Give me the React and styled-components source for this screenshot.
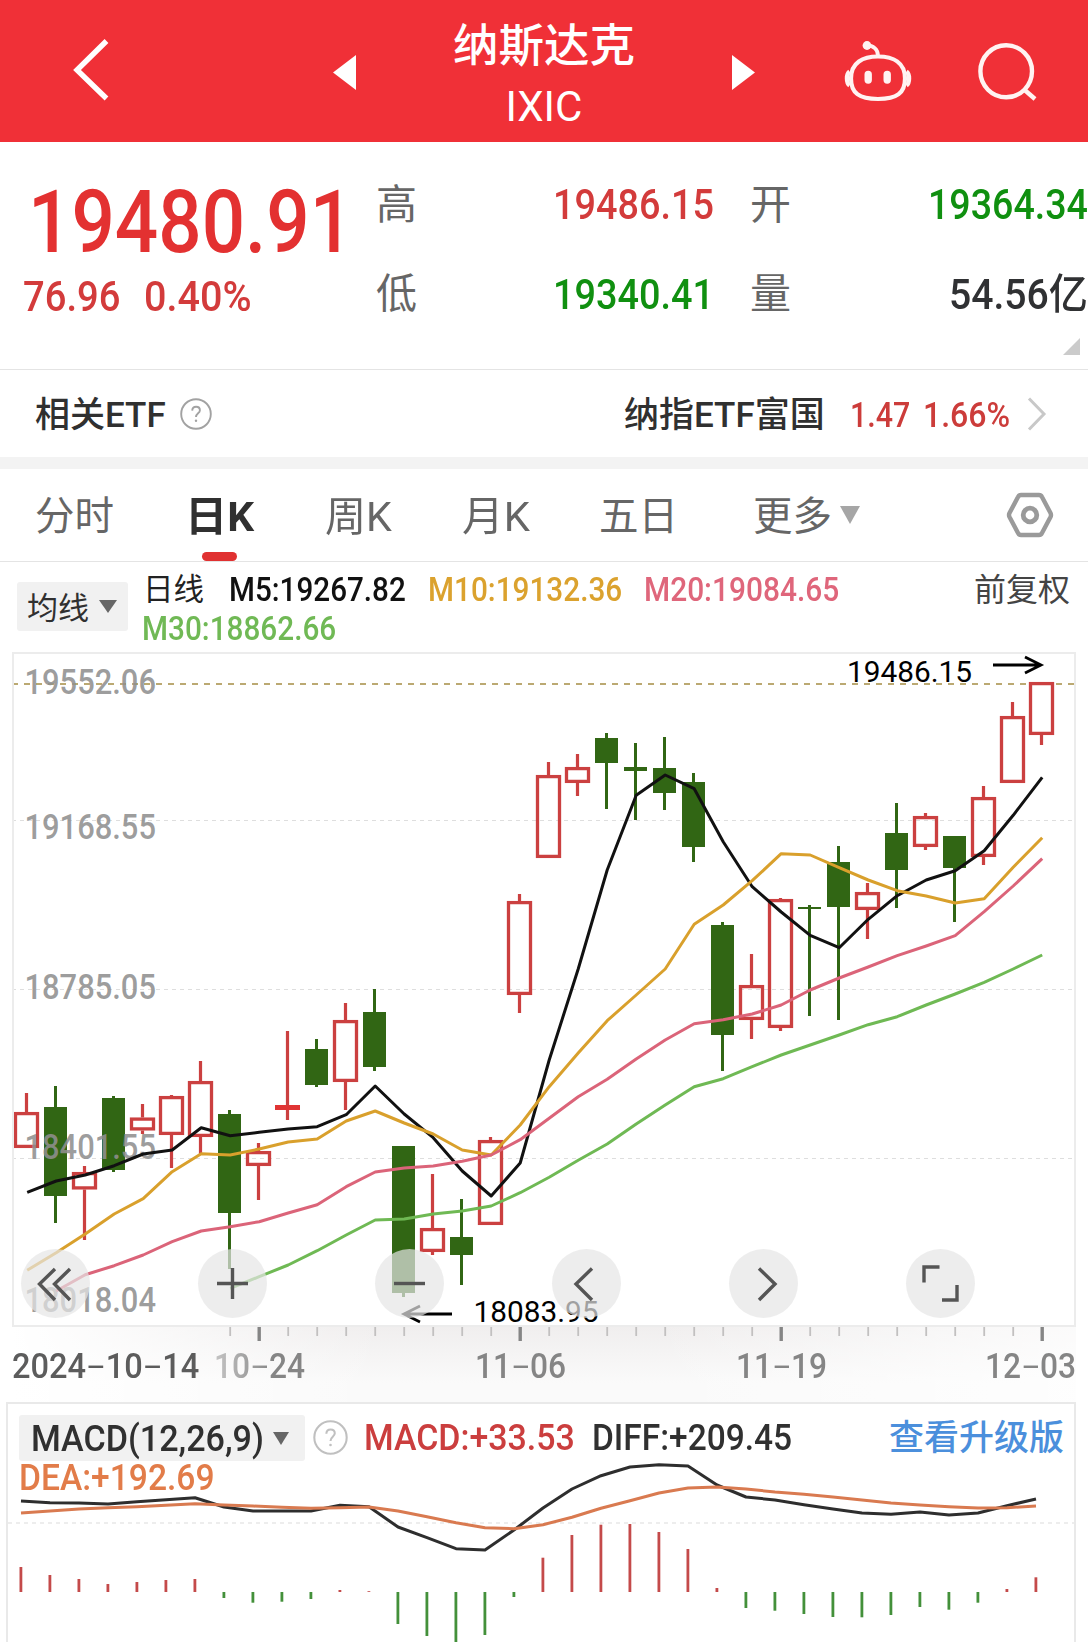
import React, { useLayoutEffect, useRef, useState } from "react";
import styled, { createGlobalStyle, css } from "styled-components";

const GlobalStyle = createGlobalStyle`
  * { box-sizing: border-box; }
  html, body { margin: 0; padding: 0; background: #fff; }
  body { font-family: Roboto, "Noto Sans CJK SC", sans-serif; overflow: hidden; }
  svg { display: block; }
`;

const UP = "#d33b3b";
const DOWN = "#109010";
const CANDLE_UP = "#cb4040";
const CANDLE_DOWN = "#316614";

/* ---------- text that is condensed to a given width ---------- */

const FitBox = styled.span`
  display: block;
  flex: none;
  width: ${(p) => p.$w}px;
  margin-left: ${(p) => p.$gap || 0}px;
  height: ${(p) => p.$line}px;
  line-height: ${(p) => p.$line + 2 * p.$drop}px;
  font-size: ${(p) => p.$size}px;
  font-weight: ${(p) => p.$weight || 500};
  color: ${(p) => p.$color};
  white-space: nowrap;
`;

const FitInner = styled.span`
  display: inline-block;
  vertical-align: top;
  transform-origin: 0 50%;
`;

const Dash = styled.span`
  display: inline-block;
  transform: scale(1.75, 0.75);
  margin: 0 0.13em;
`;

function Fit({ w, gap, line = 50, drop = 0, size, weight, color, children }) {
  const ref = useRef(null);
  const [scale, setScale] = useState(1);
  useLayoutEffect(() => {
    const measure = () => ref.current && setScale(w / ref.current.offsetWidth);
    measure();
    if (document.fonts) document.fonts.ready.then(measure);
  }, [w]);
  const parts = String(children).split("-");
  return (
    <FitBox $w={w} $gap={gap} $line={line} $drop={drop} $size={size} $weight={weight} $color={color}>
      <FitInner ref={ref} style={{ transform: `scaleX(${scale})` }}>
        {parts.map((t, i) => (
          <React.Fragment key={i}>
            {i > 0 && <Dash>-</Dash>}
            {t}
          </React.Fragment>
        ))}
      </FitInner>
    </FitBox>
  );
}

/* ---------- page pieces ---------- */

const Page = styled.main`
  width: 1088px;
  height: 1642px;
  overflow: hidden;
  background: #fff;
`;

const Header = styled.header`
  display: flex;
  align-items: flex-start;
  height: 142px;
  background: #f03037;
`;

const IconSlot = styled.span`
  flex: none;
  margin-left: ${(p) => p.$gap || 0}px;
  margin-top: ${(p) => p.$top || 0}px;
`;

const TitleBlock = styled.div`
  flex: none;
  width: 376px;
  padding-top: 15px;
  display: flex;
  flex-direction: column;
  align-items: center;
`;

const Quote = styled.section`
  position: relative;
  display: flex;
  height: 228px;
  border-bottom: 1px solid #e4e4e4;
`;

const PriceBlock = styled.div`
  flex: none;
  width: 376px;
  padding-top: 40px;
`;

const Line = styled.div`
  display: flex;
  align-items: center;
`;

const Stats = styled.div`
  display: grid;
  grid-template-columns: 39px 299px 36px 39px 299px;
  grid-template-rows: 89px 89px;
  align-items: center;
  padding-top: 17px;
  height: 195px;
`;

const StatValue = styled.div`
  display: flex;
  justify-content: flex-end;
`;

const Corner = styled.i`
  position: absolute;
  right: 8px;
  bottom: 14px;
  border-style: solid;
  border-width: 0 0 17px 17px;
  border-color: transparent transparent #cbcbcb transparent;
`;

const EtfRow = styled.section`
  display: flex;
  align-items: center;
  height: 99px;
  border-bottom: 12px solid #f3f3f3;
`;

const Tabs = styled.nav`
  display: flex;
  align-items: center;
  height: 93px;
  border-bottom: 1px solid #e4e4e4;
`;

const Tab = styled.div`
  position: relative;
  flex: none;
  margin-left: ${(p) => p.$gap}px;
  ${(p) =>
    p.$active &&
    css`
      &::after {
        content: "";
        position: absolute;
        left: 17px;
        bottom: -21px;
        width: 35px;
        height: 9px;
        border-radius: 5px;
        background: #e03131;
      }
    `}
`;

const Caret = styled.i`
  flex: none;
  margin-left: ${(p) => p.$gap}px;
  border-style: solid;
  border-width: ${(p) => p.$h}px ${(p) => p.$w / 2}px 0;
  border-color: ${(p) => p.$color} transparent transparent;
`;

const MaRow = styled.section`
  display: flex;
  height: 90px;
`;

const Pill = styled.div`
  flex: none;
  display: flex;
  align-items: center;
  width: ${(p) => p.$w}px;
  height: ${(p) => p.$h}px;
  margin: ${(p) => p.$m};
  border-radius: 3px;
  background: #f1f1f1;
`;

const MaValues = styled.div`
  flex: none;
  width: 832px;
  padding-top: 8px;
`;

const ChartPanel = styled.section`
  position: relative;
  width: 1064px;
  height: 675px;
  margin-left: 12px;
  border: 2px solid #ececec;
`;

const Controls = styled.div`
  position: absolute;
  left: 7px;
  bottom: 7px;
  display: flex;
  gap: 108px;
`;

const RoundButton = styled.button`
  width: 69px;
  height: 69px;
  padding: 0;
  border: 0;
  border-radius: 50%;
  background: rgba(230, 230, 230, 0.7);
`;

const Axis = styled.section`
  width: 1064px;
  height: 75px;
  margin-left: 12px;
  background: linear-gradient(90deg, #fff 0, rgba(255, 255, 255, 0) 35%, rgba(255, 255, 255, 0) 60%, rgba(255, 255, 255, 0.75) 100%),
    linear-gradient(#f0eeee, #fafafa 75%);
`;

const Dates = styled.div`
  display: flex;
  padding-top: 9px;
`;

const FadeIn = styled.div`
  margin-left: 15px;
  -webkit-mask-image: linear-gradient(90deg, rgba(0, 0, 0, 0.45), #000 65%);
  mask-image: linear-gradient(90deg, rgba(0, 0, 0, 0.45), #000 65%);
`;

const MacdPanel = styled.section`
  position: relative;
  width: 1070px;
  height: 240px;
  margin-left: 6px;
  border: 2px solid #e9e9e9;
  border-bottom: 0;
`;

const MacdPlot = styled.svg`
  position: absolute;
  left: 0;
  top: 0;
`;

/* ---------- data, in plot units ---------- */

// [direction, high, body top, body bottom, low]
const candles = [
  ["u", 1093, 1112, 1148, 1148], ["d", 1086, 1107, 1196, 1223], ["u", 1166, 1172, 1189.5, 1240],
  ["d", 1096, 1098, 1170, 1172], ["u", 1104, 1117.5, 1130.5, 1134], ["u", 1095, 1096, 1135, 1168],
  ["u", 1061, 1081, 1137, 1154], ["d", 1110, 1114, 1213, 1269], ["u", 1143, 1151, 1166, 1200],
  ["u", 1031, 1105, 1110, 1120], ["d", 1039, 1049, 1085, 1087], ["u", 1003, 1020, 1082, 1110],
  ["d", 989, 1012, 1067, 1071], ["d", 1146, 1146, 1293, 1297], ["u", 1174, 1228, 1252, 1255],
  ["d", 1199, 1237, 1255, 1285], ["u", 1137, 1140, 1225, 1225], ["u", 894, 901, 995, 1013],
  ["u", 762, 775, 858, 858], ["u", 754, 767, 783, 796], ["d", 733, 738, 763, 809],
  ["d", 743, 767, 771, 820], ["d", 737, 768, 793, 810], ["d", 773, 782, 847, 862],
  ["d", 922, 925, 1035, 1071], ["u", 954, 985, 1020, 1039], ["u", 898, 899, 1028, 1031],
  ["d", 905, 907, 909, 1016], ["d", 846, 862, 907, 1020], ["u", 883, 892, 910, 939],
  ["d", 803, 833, 870, 908], ["u", 813, 816, 847, 850], ["d", 836, 836, 868, 922],
  ["u", 786, 797, 857, 865], ["u", 702, 716, 783, 783], ["u", 682, 682, 735, 745],
];

const ma5 = [1192.3, 1181, 1175, 1165.7, 1154, 1150, 1127.7, 1135.7, 1132.3, 1129, 1126.7, 1114.7, 1086, 1114, 1137.7, 1171, 1196, 1163, 1060, 969, 870, 795.3, 775, 788.7, 841.7, 886.7, 912, 935.3, 947.7, 919.3, 895.7, 880, 870.7, 850.7, 815.3, 777.3];
const ma10 = [1270.3, 1252.7, 1234, 1214, 1198.7, 1171.7, 1153.7, 1155, 1149, 1142, 1139, 1121, 1111, 1123, 1134, 1150, 1155, 1125, 1086.7, 1053, 1020.7, 995, 969, 924.3, 905, 880.7, 853.7, 855, 867.7, 880, 890.7, 896, 903, 898.7, 867.3, 837.7];
const ma20 = [1291, 1274.7, 1265.7, 1255, 1241.7, 1231, 1226.7, 1221.7, 1213, 1204.7, 1186.7, 1172, 1168, 1166, 1161.3, 1155, 1139.7, 1118.3, 1096.7, 1079.3, 1059, 1040, 1023.7, 1019.7, 1014, 1005, 990, 978, 967, 955.7, 946, 935.7, 911.7, 886, 858.7];
const ma30 = [1288.3, 1276.7, 1265, 1250.7, 1235, 1220, 1219, 1214, 1211, 1206, 1192.7, 1177.3, 1160.3, 1144, 1124, 1105, 1086.7, 1078.7, 1066.7, 1055, 1045, 1035, 1024.7, 1016.7, 1005, 994, 982.3, 969, 955];

const diff = [1501, 1502.7, 1503, 1504, 1501.7, 1499.7, 1497.7, 1507, 1511, 1511, 1511, 1505.3, 1506.7, 1527, 1537.7, 1548.7, 1550, 1530, 1508, 1489, 1475.7, 1467, 1464.7, 1466, 1485, 1497, 1500, 1504.7, 1509, 1513, 1514.3, 1512, 1515, 1513, 1505.7, 1499];
const dea = [1513, 1511, 1509, 1507.7, 1506.7, 1505.3, 1503.7, 1505, 1506, 1507.3, 1508.3, 1507.7, 1507, 1511, 1516.7, 1522.7, 1527.7, 1528.7, 1524.7, 1517.3, 1508.3, 1500.7, 1493, 1488, 1487, 1489, 1492, 1494.3, 1497, 1500, 1503, 1505, 1506.7, 1508, 1507.7, 1506];
const bars = [1567, 1575, 1579, 1584, 1582, 1580, 1579, 1598, 1602.7, 1601.7, 1599, 1590, 1591.2, 1624, 1636, 1650, 1635, 1597, 1557.7, 1535, 1524.7, 1524, 1532, 1549, 1588, 1608, 1610.7, 1614, 1617, 1617.3, 1615, 1607, 1609.7, 1602.7, 1589, 1577.3];

const line = (ys, x0, skip = 0) => ys.map((y, i) => `${x0 + 29 * (i + skip)},${y}`).join(" ");

function Candle({ i, data }) {
  const [dir, high, top, bottom, low] = data;
  const x = 26.5 + 29 * i;
  if (dir === "d") {
    return (
      <g fill={CANDLE_DOWN}>
        <rect x={x - 1.5} y={high} width="3" height={low - high} />
        <rect x={x - 11.5} y={top} width="23" height={bottom - top} />
      </g>
    );
  }
  return (
    <g fill={CANDLE_UP}>
      <rect x={x - 1.6} y={high} width="3.200" height={top - high} />
      <rect x={x - 1.6} y={bottom} width="3.200" height={low - bottom} />
      {bottom - top < 6 ? (
        <rect x={x - 12.5} y={top} width="25" height={bottom - top} fill="#e03434" />
      ) : (
        <rect x={x - 11} y={top + 1.6} width="22" height={bottom - top - 3.2} fill="none" stroke={CANDLE_UP} strokeWidth="3.300" />
      )}
    </g>
  );
}

function CandleChart() {
  const priceLabels = [["19552.06", 694], ["19168.55", 838.5], ["18785.05", 998.5], ["18401.55", 1159], ["18018.04", 1311.5]];
  return (
    <svg width="1060" height="671" viewBox="14 654 1060 671">
      {[820.5, 989.5, 1158.5].map((y) => (
        <line key={y} x1="12" x2="1074" y1={y} y2={y} stroke="#dedede" strokeDasharray="4 4" />
      ))}
      <line x1="12" x2="1074" y1="684" y2="684" stroke="#bba972" strokeWidth="2" strokeDasharray="6 6" />
      {candles.map((c, i) => (
        <Candle key={i} i={i} data={c} />
      ))}
      <g fill="#8f8f8f" fillOpacity="0.88" fontSize="35" fontWeight="500">
        {priceLabels.map(([t, y]) => (
          <text key={t} x="24.5" y={y} textLength="131.500" lengthAdjust="spacingAndGlyphs">{t}</text>
        ))}
      </g>
      <g fill="none" strokeWidth="3" strokeLinejoin="round">
        <polyline points={line(ma30, 27.2, 7)} stroke="#6fb954" />
        <polyline points={line(ma5, 27.2)} stroke="#111" />
        <polyline points={line(ma10, 27.2)} stroke="#d9a02c" />
        <polyline points={line(ma20, 27.2, 1)} stroke="#db6479" />
      </g>
      <g fill="#000" fontSize="29.500">
        <text x="847" y="682" textLength="125" lengthAdjust="spacingAndGlyphs">19486.15</text>
        <text x="473.500" y="1322" textLength="125" lengthAdjust="spacingAndGlyphs">18083.95</text>
      </g>
      <g fill="none" stroke="#000" strokeWidth="2.8">
        <path d="M993 665h48M1025 657l16 8-16 8" />
        <path d="M452 1314h-47M420 1306l-16 8 16 8" />
      </g>
    </svg>
  );
}

const controlPaths = [
  "M34 20 18.500 35 34 51M49 20 33.500 35 49 51",
  "M19 34.500h31M34.500 19v31",
  "M19 34.500h31",
  "M40 19.500 24 35 40 51",
  "M30 19.500 46 35 30 51",
  "M18 33.500V18h15.500M51 36v15H36",
];

function HelpIcon({ size, color }) {
  return (
    <svg width={size} height={size} viewBox="0 0 32 32" fill="none" stroke={color} strokeWidth="1.9">
      <circle cx="16" cy="16" r="14.800" />
      <path d="M12.200 12.600c.1-2.500 1.700-3.900 3.900-3.900s3.800 1.400 3.800 3.500c0 3.200-3.900 3.100-3.900 6.900" />
      <circle cx="16" cy="22.800" r="1.200" fill={color} stroke="none" />
    </svg>
  );
}

export default function App() {
  return (
    <>
      <GlobalStyle />
      <Page>
        <Header>
          <IconSlot $gap={70} $top={37}>
            <svg width="42" height="66" fill="none" stroke="#fff" strokeWidth="5.400"><path d="M36.500 4 7 33 36.500 61.500" /></svg>
          </IconSlot>
          <IconSlot $gap={221} $top={55}>
            <svg width="23" height="35" fill="#fff"><path d="M23 0v35L0 17.500z" /></svg>
          </IconSlot>
          <TitleBlock>
            <Fit w={182} line={60} drop={2} size={45.5} weight={500} color="#fff">纳斯达克</Fit>
            <Fit w={77} line={62} drop={1} size={42} weight={400} color="#fff">IXIC</Fit>
          </TitleBlock>
          <IconSlot $top={55}>
            <svg width="23" height="35" fill="#fff"><path d="M0 0v35l23-17.500z" /></svg>
          </IconSlot>
          <IconSlot $gap={89} $top={40}>
            <svg width="68" height="64" viewBox="0 0 68 64" fill="none" stroke="#fff3f2" strokeWidth="4.200">
              <circle cx="23" cy="5.500" r="4.400" fill="#fff3f2" stroke="none" />
              <path d="M23 5.500C29 5.500 34 9 34 16" strokeWidth="3.800" />
              <path d="M34 16.500C49 16.500 61 22.500 61 38.500 61 53 53 59 34 59S7 53 7 38.500C7 22.500 19 16.500 34 16.500z" />
              <path d="M5.500 31.500C2 34 2 43 5.500 45.500M62.500 31.500C66 34 66 43 62.500 45.500" />
              <path d="M24.200 34.500v5.500M43.200 34.500v5.500" strokeWidth="7.400" strokeLinecap="round" />
            </svg>
          </IconSlot>
          <IconSlot $gap={65} $top={42}>
            <svg width="62" height="62" fill="none" stroke="#fff3f2" strokeWidth="4.400">
              <ellipse cx="29.200" cy="29.300" rx="25.800" ry="26" />
              <path d="M46.500 47 58 57" />
            </svg>
          </IconSlot>
        </Header>

        <Quote>
          <PriceBlock>
            <Fit w={325} gap={28} line={80} drop={1} size={86.5} color="#e33131">19480.91</Fit>
            <Line>
              <Fit w={97} gap={23} line={66} drop={1.5} size={42.5} color={UP}>76.96</Fit>
              <Fit w={108} gap={24} line={66} drop={1.5} size={42.5} color={UP}>0.40%</Fit>
            </Line>
          </PriceBlock>
          <Stats>
            <Fit w={41} drop={1} size={41} weight={400} color="#666">高</Fit>
            <StatValue><Fit w={161} drop={1} size={42.5} color={UP}>19486.15</Fit></StatValue>
            <span />
            <Fit w={41} drop={1} size={41} weight={400} color="#666">开</Fit>
            <StatValue><Fit w={160} drop={1} size={42.5} color={DOWN}>19364.34</Fit></StatValue>
            <Fit w={41} drop={1.5} size={41} weight={400} color="#666">低</Fit>
            <StatValue><Fit w={161} drop={1.5} size={42.5} color={DOWN}>19340.41</Fit></StatValue>
            <span />
            <Fit w={41} drop={1.5} size={41} weight={400} color="#666">量</Fit>
            <StatValue><Fit w={139} drop={1.5} size={42.5} color="#303133">54.56亿</Fit></StatValue>
          </Stats>
          <Corner />
        </Quote>

        <EtfRow>
          <Fit w={131} drop={2} gap={35} size={35} weight={500} color="#303030">相关ETF</Fit>
          <IconSlot $gap={14}><HelpIcon size={32} color="#a2a2a2" /></IconSlot>
          <Fit w={201} drop={2} gap={412} size={35} weight={500} color="#303030">纳指ETF富国</Fit>
          <Fit w={60} drop={2} gap={25} size={35} color="#cc3c3a">1.47</Fit>
          <Fit w={87} drop={2} gap={13} size={35} color="#cc3c3a">1.66%</Fit>
          <IconSlot $gap={16}>
            <svg width="22" height="36" fill="none" stroke="#c8c8c8" strokeWidth="3"><path d="M3 2.500 18 18 3 33.500" /></svg>
          </IconSlot>
        </EtfRow>

        <Tabs>
          <Tab $gap={35}><Fit w={79} drop={2} size={39.5} weight={400} color="#666">分时</Fit></Tab>
          <Tab $gap={71} $active><Fit w={69} drop={2} size={41} weight={700} color="#303030">日K</Fit></Tab>
          <Tab $gap={71}><Fit w={67} drop={2} size={40.5} weight={400} color="#666">周K</Fit></Tab>
          <Tab $gap={70}><Fit w={68} drop={2} size={40.5} weight={400} color="#666">月K</Fit></Tab>
          <Tab $gap={69}><Fit w={79} drop={2} size={39.5} weight={400} color="#666">五日</Fit></Tab>
          <Tab $gap={75}><Fit w={79} drop={2} size={39.5} weight={400} color="#666">更多</Fit></Tab>
          <Caret $gap={8} $w={21} $h={18} $color="#a6a6a6" />
          <IconSlot $gap={146}>
            <svg width="48" height="46" fill="none" stroke="#9a9a9a" strokeWidth="4.400" strokeLinejoin="round">
              <path d="M15 3h18q2 0 3 2l8.500 16q1 2 0 4L36 41q-1 2-3 2H15q-2 0-3-2L3.500 25q-1-2 0-4L12 5q1-2 3-2z" />
              <circle cx="24" cy="23" r="6.800" strokeWidth="4.800" />
            </svg>
          </IconSlot>
        </Tabs>

        <MaRow>
          <Pill $w={111} $h={49} $m="20px 0 0 17px">
            <Fit w={62} drop={1.5} gap={10} line={48} size={31} weight={400} color="#303030">均线</Fit>
            <Caret $gap={10} $w={18} $h={13} $color="#666" />
          </Pill>
          <MaValues>
            <Line>
              <Fit w={61} gap={15} line={40} size={30.5} weight={400} color="#222">日线</Fit>
              <Fit w={177} gap={25} line={40} size={32.5} color="#111">M5:19267.82</Fit>
              <Fit w={194} gap={22} line={40} size={32.5} color="#dba22e">M10:19132.36</Fit>
              <Fit w={195} gap={22} line={40} size={32.5} color="#df667b">M20:19084.65</Fit>
            </Line>
            <Fit w={194} gap={14} line={39} size={32.5} color="#70b955">M30:18862.66</Fit>
          </MaValues>
          <Fit w={96} gap={14} line={54} drop={1.5} size={32} weight={400} color="#444">前复权</Fit>
        </MaRow>

        <ChartPanel>
          <CandleChart />
          <Controls>
            {controlPaths.map((d) => (
              <RoundButton key={d}>
                <svg width="69" height="69" fill="none" stroke="#555" strokeWidth="3.400"><path d={d} /></svg>
              </RoundButton>
            ))}
          </Controls>
        </ChartPanel>

        <Axis>
          <svg width="1064" height="14" viewBox="12 0 1064 14">
            {candles.map((_, i) => {
              if (i < 7) return null;
              const major = (i - 8) % 9 === 0;
              return (
                <rect key={i} x={27.2 + 29 * i - (major ? 1.7 : 0.9)} y="0" width={major ? 3.400 : 1.800} height={major ? 14 : 9} fill={major ? "#858585" : "#c2c0c0"} />
              );
            })}
          </svg>
          <Dates>
            <Fit w={187} gap={0} line={32} drop={0.5} size={34.5} color="#5c5c5c">2024-10-14</Fit>
            <FadeIn><Fit w={91} line={32} drop={0.5} size={34.5} color="#858585">10-24</Fit></FadeIn>
            <Fit w={91} gap={170} line={32} drop={0.5} size={34.5} color="#858585">11-06</Fit>
            <Fit w={91} gap={170} line={32} drop={0.5} size={34.5} color="#858585">11-19</Fit>
            <Fit w={91} gap={158} line={32} drop={0.5} size={34.5} color="#858585">12-03</Fit>
          </Dates>
        </Axis>

        <MacdPanel>
          <MacdPlot width="1066" height="238" viewBox="8 1404 1066 238">
            <line x1="8" x2="1074" y1="1523" y2="1523" stroke="#e8e8e8" strokeWidth="1.500" strokeDasharray="4 4" />
            {bars.map((y, i) => (
              <rect key={i} x={20.9 + 29 * i - 1.4} y={Math.min(y, 1592)} width="2.800" height={Math.abs(y - 1592)} fill={y < 1592 ? "#c44a4a" : "#43903a"} />
            ))}
            <g fill="none" strokeWidth="3" strokeLinejoin="round">
              <polyline points={line(diff, 21)} stroke="#2e2e2e" />
              <polyline points={line(dea, 21)} stroke="#d97a50" />
            </g>
          </MacdPlot>
          <Line>
            <Pill $w={286} $h={46} $m="10px 0 0 11px">
              <Fit w={233} drop={1.5} gap={12} line={46} size={36} color="#303030">MACD(12,26,9)</Fit>
              <Caret $gap={9} $w={17} $h={13} $color="#666" />
            </Pill>
            <IconSlot $gap={8} $top={8}><HelpIcon size={35} color="#c0c0c0" /></IconSlot>
            <IconSlot $gap={16} $top={8}><Fit w={211} drop={1} size={36} color="#cb3e3e">MACD:+33.53</Fit></IconSlot>
            <IconSlot $gap={17} $top={8}><Fit w={200} drop={1} size={36} color="#303030">DIFF:+209.45</Fit></IconSlot>
            <IconSlot $gap={97} $top={8}><Fit w={175} drop={2} size={35} weight={500} color="#4b8fdc">查看升级版</Fit></IconSlot>
          </Line>
          <Fit w={196} gap={11} line={32} size={36} color="#e27c49">DEA:+192.69</Fit>
        </MacdPanel>
      </Page>
    </>
  );
}
